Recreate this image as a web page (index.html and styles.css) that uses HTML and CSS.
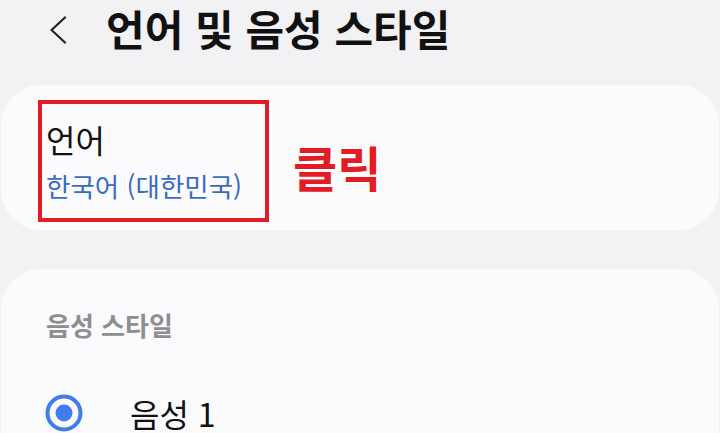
FILE: index.html
```html
<!DOCTYPE html>
<html lang="ko">
<head>
<meta charset="utf-8">
<link rel="stylesheet" href="styles.css">
</head>
<body>
<header class="header">
  <svg class="back" width="20" height="28" viewBox="0 0 20 28"><path d="M17 1.5 L3.5 14 L17 26.5" fill="none" stroke="#222" stroke-width="2.2" stroke-linecap="round" stroke-linejoin="round"/></svg>
  <h1 class="title">언어 및 음성 스타일</h1>
</header>
<section class="card card-lang">
  <div class="highlight">
    <div class="item-title">언어</div>
    <div class="item-sub">한국어 (대한민국)</div>
  </div>
  <div class="click-label">클릭</div>
</section>
<section class="card card-voice">
  <div class="section-label">음성 스타일</div>
  <div class="radio-row">
    <svg class="radio" width="38" height="38" viewBox="0 0 38 38"><circle cx="19" cy="19" r="16.5" fill="none" stroke="#3f7cf0" stroke-width="4"/><circle cx="19" cy="19" r="8.5" fill="#3f7cf0"/></svg>
    <span class="radio-text">음성 1</span>
  </div>
</section>
</body>
</html>
```
FILE: styles.css
```css
html, body {
  margin: 0;
  padding: 0;
}
body {
  background: #f2f2f4;
  font-family: "Noto Sans CJK KR", "Noto Sans", sans-serif;
}
.header {
  height: 85px;
  box-sizing: border-box;
  display: flex;
  align-items: flex-start;
  padding-top: 1px;
  padding-left: 48px;
}
.back {
  flex: none;
  margin-top: 15px;
}
.title {
  flex: none;
  margin: 0 0 0 38px;
  font-size: 42px;
  line-height: 1.3;
  font-weight: 700;
  color: #111;
  white-space: nowrap;
}
.card {
  background: #fbfbfd;
  border-radius: 40px;
  margin: 0 1px;
}
.card-lang {
  height: 145px;
  box-sizing: border-box;
  display: flex;
  align-items: flex-start;
  padding: 15px 0 0 37px;
}
.highlight {
  width: 231px;
  height: 122px;
  box-sizing: border-box;
  border: 4px solid #e21b24;
  padding: 19px 0 0 4px;
}
.item-title {
  font-size: 32px;
  line-height: 1;
  color: #111;
}
.item-sub {
  margin-top: 18px;
  font-size: 26.5px;
  line-height: 1;
  color: #3a6cc2;
}
.click-label {
  margin: 42px 0 0 24px;
  font-size: 48px;
  line-height: 1;
  font-weight: 700;
  color: #e21b24;
}
.card-voice {
  margin-top: 39px;
  height: 164px;
  box-sizing: border-box;
  padding: 43px 0 0 45px;
  border-radius: 40px 40px 0 0;
}
.section-label {
  font-size: 26px;
  line-height: 1;
  font-weight: 700;
  color: #8e8e90;
}
.radio-row {
  margin-top: 56px;
  display: flex;
  align-items: center;
}
.radio {
  flex: none;
  margin-left: -1px;
}
.radio-text {
  margin-left: 47px;
  font-size: 32px;
  line-height: 1.15;
  color: #111;
}
```
